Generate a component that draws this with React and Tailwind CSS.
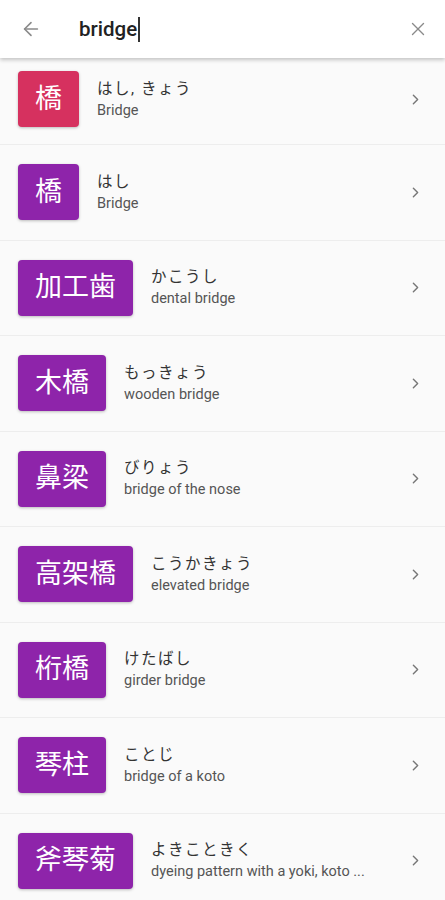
import React from "react";
import { ArrowLeft, X, ChevronRight } from "lucide-react";

const items = [
  { kanji: "橋", reading: "はし, きょう", meaning: "Bridge", pink: true },
  { kanji: "橋", reading: "はし", meaning: "Bridge" },
  { kanji: "加工歯", reading: "かこうし", meaning: "dental bridge" },
  { kanji: "木橋", reading: "もっきょう", meaning: "wooden bridge" },
  { kanji: "鼻梁", reading: "びりょう", meaning: "bridge of the nose" },
  { kanji: "高架橋", reading: "こうかきょう", meaning: "elevated bridge" },
  { kanji: "桁橋", reading: "けたばし", meaning: "girder bridge" },
  { kanji: "琴柱", reading: "ことじ", meaning: "bridge of a koto" },
  { kanji: "斧琴菊", reading: "よきこときく", meaning: "dyeing pattern with a yoki, koto ..." },
];

function Row({ item, first }) {
  return (
    <div
      className={
        "flex items-center pl-[18px] pr-[21px] border-b border-[#ededed] " +
        (first ? "h-[87px] pb-[4px]" : "h-[95.5px]")
      }
    >
      <div
        className={
          "h-[56px] px-[17px] flex items-center justify-center rounded-[4px] text-white text-[27px] leading-none shadow-[0_1px_3px_rgba(0,0,0,0.25)] " +
          (item.pink ? "bg-[#d6315f]" : "bg-[#8e24aa]")
        }
      >
        {item.kanji}
      </div>
      <div className="flex-1 min-w-0 pl-[18px] flex flex-col">
        <div className="text-[15.5px] leading-[22px] text-[#333] tracking-[1.5px]">{item.reading}</div>
        <div className="text-[14.5px] leading-[21px] text-[#555] truncate">{item.meaning}</div>
      </div>
      <ChevronRight size={17} strokeWidth={2} className="text-[#777] shrink-0" />
    </div>
  );
}

export default function App() {
  return (
    <div
      className="w-[445px] h-[900px] overflow-hidden bg-[#fafafa] flex flex-col"
      style={{ fontFamily: 'Roboto, "Noto Sans CJK JP", sans-serif' }}
    >
      <div className="h-[58px] shrink-0 bg-white flex items-center pl-[20px] pr-[16px] shadow-[0_2px_4px_rgba(0,0,0,0.22)] relative z-10">
        <ArrowLeft size={22} strokeWidth={1.75} className="text-[#8a8a8a]" />
        <div className="flex-1 pl-[37px] flex items-center text-[20.5px] text-[#222] font-medium">
          bridge<span className="inline-block w-[1.5px] h-[25px] bg-[#333] ml-[1px]" />
        </div>
        <X size={22} strokeWidth={1.5} className="text-[#8a8a8a]" />
      </div>
      <div className="flex flex-col">
        {items.map((item, i) => (
          <Row key={i} item={item} first={i === 0} />
        ))}
      </div>
    </div>
  );
}
